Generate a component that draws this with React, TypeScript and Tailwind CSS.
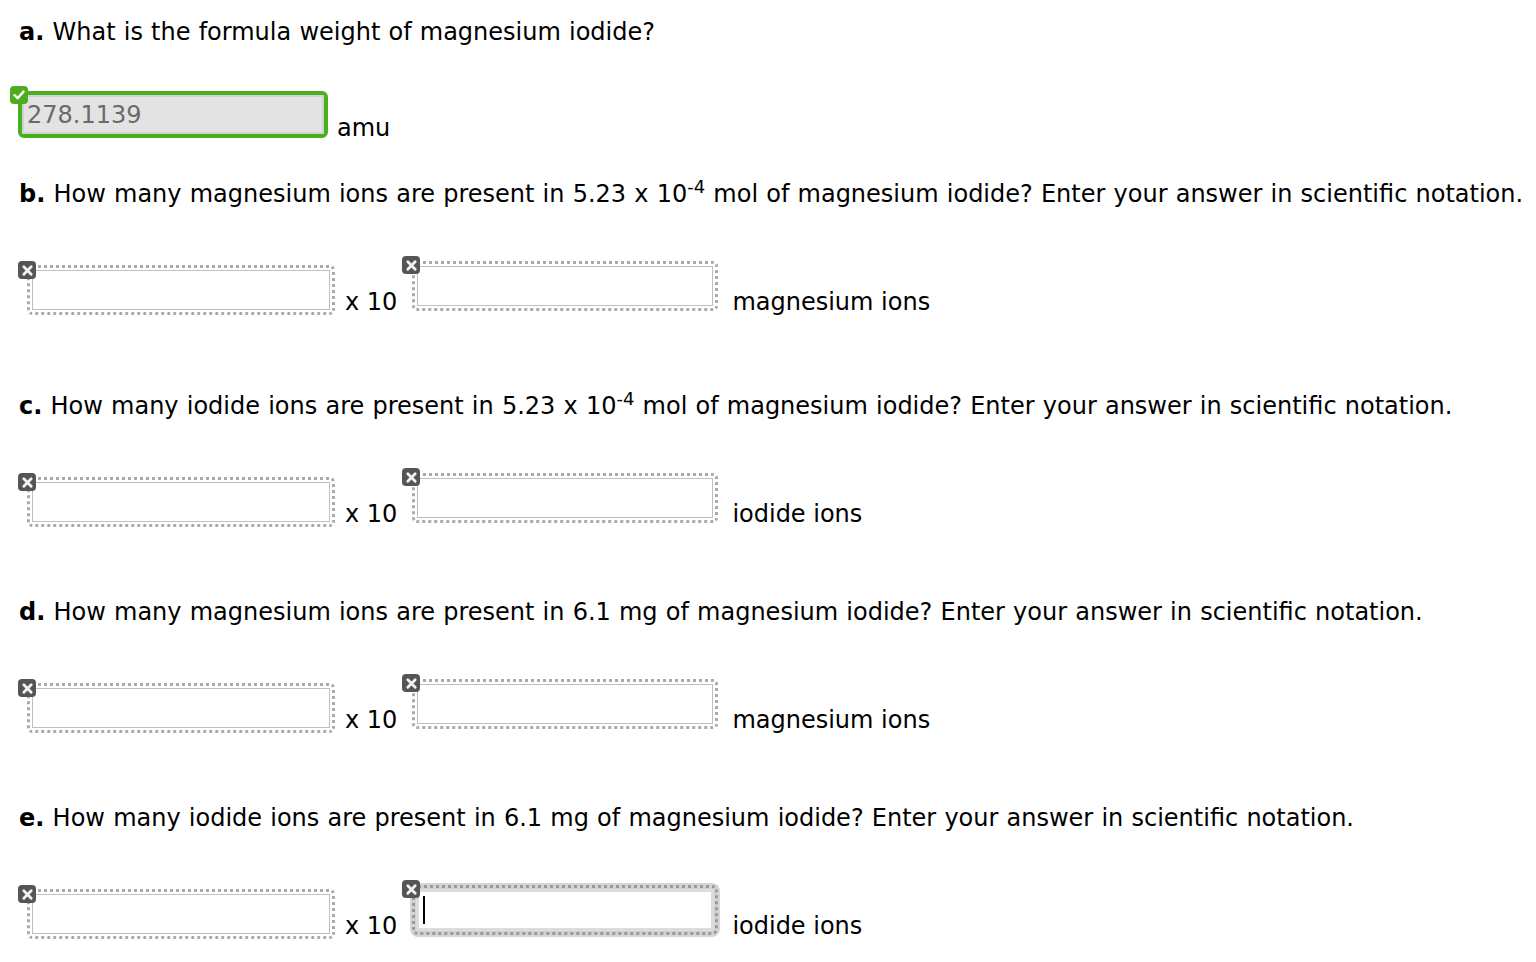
import React from "react";

const XBadge = ({ pos }: { pos: string }) => (
  <div
    className={
      "absolute z-10 w-[18px] h-[18px] rounded-[4px] bg-[#555555] flex items-center justify-center " +
      pos
    }
  >
    <svg width="13" height="13" viewBox="0 0 12 12">
      <path
        d="M2.6 2.6 L9.4 9.4 M9.4 2.6 L2.6 9.4"
        stroke="#f2f2f2"
        strokeWidth="2.6"
        strokeLinecap="round"
      />
    </svg>
  </div>
);

const CheckBadge = () => (
  <div className="absolute z-10 -left-[8px] -top-[5px] w-[18px] h-[18px] rounded-[4px] bg-[#4cae1e] flex items-center justify-center">
    <svg width="14" height="14" viewBox="0 0 14 14">
      <path
        d="M2.5 7.2 L5.6 10.2 L11.5 3.6"
        stroke="#ffffff"
        strokeWidth="2.4"
        fill="none"
        strokeLinecap="round"
        strokeLinejoin="round"
      />
    </svg>
  </div>
);

const DashedBox = ({ w }: { w: string }) => (
  <div
    className={
      "h-[50px] rounded-[5px] border-[3px] border-dotted border-[#ababab] p-[2px] " + w
    }
  >
    <div className="w-full h-full border border-[#bfbfbf] bg-white" />
  </div>
);

const FocusedBox = () => (
  <div className="w-[306px] h-[50px] rounded-[6px] border-[3px] border-dotted border-[#9a9a9a] bg-[#d2d2d2] shadow-[0_0_0_2px_#d6d6d6] p-[1px]">
    <div className="w-full h-full border-[3px] border-[#dcdcdc] bg-white flex items-center pl-[4px]">
      <div className="w-[2px] h-[28px] bg-black" />
    </div>
  </div>
);

const Row = ({ unit, focused }: { unit: string; focused?: boolean }) => (
  <div className="flex items-start mt-[46px]">
    <div className="relative ml-[8px] mt-[9px]">
      <XBadge pos="-left-[9px] -top-[4px]" />
      <DashedBox w="w-[308px]" />
    </div>
    <span className="ml-[10px] mt-[30px] leading-[32px] whitespace-nowrap">x 10</span>
    <div className="relative ml-[15px] mt-[5px]">
      <XBadge pos="-left-[10px] -top-[5px]" />
      {focused ? <FocusedBox /> : <DashedBox w="w-[306px]" />}
    </div>
    <span className="ml-[14px] mt-[30px] leading-[32px] whitespace-nowrap">{unit}</span>
  </div>
);

const Q = ({ label, children, mt }: { label: string; children: React.ReactNode; mt: string }) => (
  <p className={"leading-[32px] whitespace-nowrap [word-spacing:0.55px] " + mt}>
    <b className="font-bold">{label}</b> {children}
  </p>
);

export default function App() {
  return (
    <div
      className="min-h-[962px] w-[1536px] bg-white text-black pl-[19px] pt-[16px] text-[24px]"
      style={{ fontFamily: '"DejaVu Sans", Verdana, sans-serif' }}
    >
      <Q label="a." mt="mt-0">
        What is the formula weight of magnesium iodide?
      </Q>

      <div className="flex items-start mt-[39px]">
        <div className="relative -ml-[1px] mt-[4px]">
          <CheckBadge />
          <div className="w-[310px] h-[47px] rounded-[6px] border-[4px] border-[#48b01c] bg-[#e3e3e3]">
            <div className="w-full h-full border-2 border-[#d2d2d2] flex items-center pl-[3px] text-[#6a6a6a] leading-none">
              278.1139
            </div>
          </div>
        </div>
        <span className="ml-[9px] mt-[25px] leading-[32px]">amu</span>
      </div>

      <Q label="b." mt="mt-[34px]">
        How many magnesium ions are present in 5.23 x 10<sup>-4</sup> mol of magnesium iodide? Enter your answer in scientific notation.
      </Q>
      <Row unit="magnesium ions" />

      <Q label="c." mt="mt-[72px]">
        How many iodide ions are present in 5.23 x 10<sup>-4</sup> mol of magnesium iodide? Enter your answer in scientific notation.
      </Q>
      <Row unit="iodide ions" />

      <Q label="d." mt="mt-[66px]">
        How many magnesium ions are present in 6.1 mg of magnesium iodide? Enter your answer in scientific notation.
      </Q>
      <Row unit="magnesium ions" />

      <Q label="e." mt="mt-[66px]">
        How many iodide ions are present in 6.1 mg of magnesium iodide? Enter your answer in scientific notation.
      </Q>
      <Row unit="iodide ions" focused />
    </div>
  );
}
